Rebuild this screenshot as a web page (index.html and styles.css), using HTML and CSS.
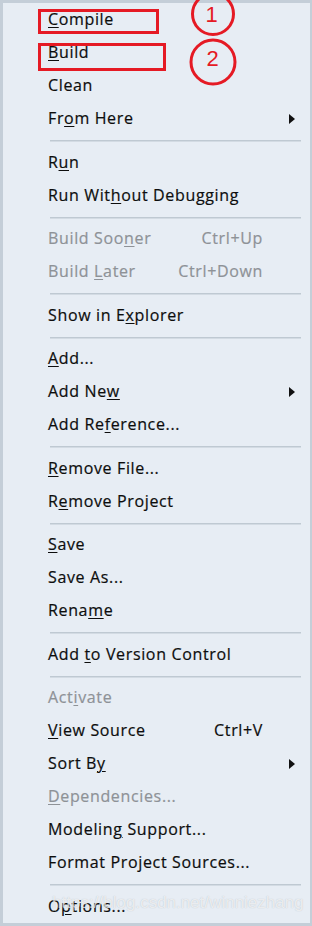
FILE: index.html
```html
<!DOCTYPE html>
<html>
<head>
<meta charset="utf-8">
<link rel="stylesheet" href="styles.css">
</head>
<body>
<div class="menu">
  <div class="item"><span class="label"><u>C</u>ompile</span></div>
  <div class="item"><span class="label"><u>B</u>uild</span></div>
  <div class="item"><span class="label">Clean</span></div>
  <div class="item"><span class="label">Fr<u>o</u>m Here</span><span class="key"></span><span class="sub"><i class="arrow"></i></span></div>
  <div class="sep s11"></div>
  <div class="item"><span class="label">R<u>u</u>n</span></div>
  <div class="item"><span class="label">Run Wit<u>h</u>out Debugging</span></div>
  <div class="sep s10"></div>
  <div class="item off"><span class="label">Build Soo<u>n</u>er</span><span class="key">Ctrl+Up</span></div>
  <div class="item off"><span class="label">Build <u>L</u>ater</span><span class="key">Ctrl+Down</span></div>
  <div class="sep s11"></div>
  <div class="item"><span class="label">Show in E<u>x</u>plorer</span></div>
  <div class="sep s10"></div>
  <div class="item"><span class="label"><u>A</u>dd...</span></div>
  <div class="item"><span class="label">Add Ne<u>w</u></span><span class="key"></span><span class="sub"><i class="arrow"></i></span></div>
  <div class="item"><span class="label">Add Re<u>f</u>erence...</span></div>
  <div class="sep s11"></div>
  <div class="item"><span class="label"><u>R</u>emove File...</span></div>
  <div class="item"><span class="label">R<u>e</u>move Project</span></div>
  <div class="sep s10"></div>
  <div class="item"><span class="label"><u>S</u>ave</span></div>
  <div class="item"><span class="label">Save As...</span></div>
  <div class="item"><span class="label">Rena<u>m</u>e</span></div>
  <div class="sep s11"></div>
  <div class="item"><span class="label">Add <u>t</u>o Version Control</span></div>
  <div class="sep s10"></div>
  <div class="item off"><span class="label">Act<u>i</u>vate</span></div>
  <div class="item"><span class="label"><u>V</u>iew Source</span><span class="key">Ctrl+V</span></div>
  <div class="item"><span class="label">Sort B<u>y</u></span><span class="key"></span><span class="sub"><i class="arrow"></i></span></div>
  <div class="item off"><span class="label"><u>D</u>ependencies...</span></div>
  <div class="item"><span class="label">Modelin<u>g</u> Support...</span></div>
  <div class="item"><span class="label">Format Project Sources...</span></div>
  <div class="sep s11"></div>
  <div class="item"><span class="label">O<u>p</u>tions...</span></div>

  <div class="watermark">https://blog.csdn.net/winniezhang</div>

  <svg class="marks" width="312" height="926" viewBox="0 0 312 926">
    <rect x="39.5" y="10.5" width="118" height="22" fill="none" stroke="#e51a24" stroke-width="3"/>
    <rect x="39.5" y="44.5" width="125" height="25" fill="none" stroke="#e51a24" stroke-width="3"/>
    <circle cx="213" cy="14" r="20.5" fill="none" stroke="#e51a24" stroke-width="3"/>
    <circle cx="213" cy="62" r="22" fill="none" stroke="#e51a24" stroke-width="3"/>
    <text x="212" y="22" class="num">1</text>
    <text x="213" y="66" class="num">2</text>
  </svg>
</div>
</body>
</html>
```
FILE: styles.css
```css
html, body {
  margin: 0;
  padding: 0;
  background: #e7edf4;
  overflow: hidden;
}

.menu {
  position: relative;
  box-sizing: border-box;
  width: 312px;
  height: 926px;
  background: #e7edf4;
  border-style: solid;
  border-color: #c4ced8;
  border-width: 3px 2px 3px 3px;
  font-family: "Open Sans", "Noto Sans", sans-serif;
  font-size: 16px;
  letter-spacing: 0.65px;
  color: #0d0d0d;
  -webkit-text-stroke: 0.2px currentColor;
  display: flex;
  flex-direction: column;
}

.item {
  height: 33px;
  flex: none;
  display: grid;
  grid-template-columns: 1fr auto 47px;
  align-items: center;
  padding-left: 45px;
  line-height: 33px;
  white-space: nowrap;
}

.item u {
  text-decoration: underline;
  text-decoration-thickness: 1px;
  text-underline-offset: 2px;
}

.item.off {
  color: #8e9297;
}

.key {
  text-align: right;
}

.sub {
  display: flex;
  align-items: center;
  height: 33px;
  padding-left: 26px;
}

.arrow {
  display: block;
  width: 0;
  height: 0;
  border-top: 5px solid transparent;
  border-bottom: 5px solid transparent;
  border-left: 6px solid #111;
}

.sep {
  flex: none;
  box-sizing: border-box;
  padding-top: 5px;
  margin: 0 9px 0 47px;
}

.sep::before {
  content: "";
  display: block;
  height: 1px;
  background: #bfc9d2;
  box-shadow: 0 1px 0 #d3dbe3;
}

.sep.s10 { height: 10px; }
.sep.s11 { height: 11px; }

.watermark {
  position: absolute;
  left: 49px;
  top: 890px;
  font-family: "Liberation Sans", Arial, sans-serif;
  font-size: 17px;
  letter-spacing: 0;
  -webkit-text-stroke: 0;
  color: rgba(255, 255, 255, 0.7);
  text-shadow: 0 0 1px rgba(90, 100, 110, 0.35);
  white-space: nowrap;
}

.marks {
  position: absolute;
  left: -3px;
  top: -3px;
  overflow: hidden;
}

.num {
  font-family: "Liberation Sans", Arial, sans-serif;
  font-size: 22px;
  fill: #e51a24;
  text-anchor: middle;
  -webkit-text-stroke: 0;
}
```
